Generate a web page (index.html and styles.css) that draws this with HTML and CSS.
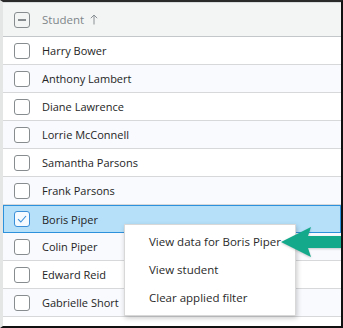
FILE: index.html
```html
<!DOCTYPE html>
<html>
<head>
<meta charset="utf-8">
<link rel="stylesheet" href="styles.css">
</head>
<body>
<div class="frame">
  <div class="grid">
    <div class="header">
      <span class="cb cb-mixed"><span class="dash"></span></span>
      <span class="hlabel">Student</span>
      <svg class="arrow-up" width="8" height="11" viewBox="0 0 8 11"><path d="M4 10.5 V1 M0.8 4.2 L4 1 L7.2 4.2" fill="none" stroke="#8a9094" stroke-width="1"/></svg>
    </div>
    <div class="row"><span class="cb"></span><span class="name">Harry Bower</span></div>
    <div class="row alt"><span class="cb"></span><span class="name">Anthony Lambert</span></div>
    <div class="row"><span class="cb"></span><span class="name">Diane Lawrence</span></div>
    <div class="row alt"><span class="cb"></span><span class="name">Lorrie McConnell</span></div>
    <div class="row"><span class="cb"></span><span class="name">Samantha Parsons</span></div>
    <div class="row alt"><span class="cb"></span><span class="name">Frank Parsons</span></div>
    <div class="row selected"><span class="cb cb-checked"><svg width="10" height="8" viewBox="0 0 10 8"><path d="M1 4.2 L3.8 7 L9 1" fill="none" stroke="#3b8fd9" stroke-width="1.1"/></svg></span><span class="name">Boris Piper</span></div>
    <div class="row alt"><span class="cb"></span><span class="name">Colin Piper</span></div>
    <div class="row"><span class="cb"></span><span class="name">Edward Reid</span></div>
    <div class="row alt"><span class="cb"></span><span class="name">Gabrielle Short</span></div>
  </div>
  <div class="menu">
    <div class="item">View data for Boris Piper</div>
    <div class="item">View student</div>
    <div class="item">Clear applied filter</div>
  </div>
  <svg class="pointer" width="61" height="32" viewBox="0 0 61 32">
    <polygon points="0,16 30,1 27,10 61,10 61,22 27,22 30,31" fill="#13a98a"/>
  </svg>
</div>
</body>
</html>
```
FILE: styles.css
```css
html, body {
  margin: 0;
  padding: 0;
  background: #ffffff;
}
.frame {
  position: relative;
  width: 343px;
  height: 328px;
  box-sizing: border-box;
  border-top: 2px solid #2a2a2a;
  border-right: 2px solid #111;
  border-bottom: 2px solid #111;
  border-left: 3px solid #e4e6e6;
  overflow: hidden;
  font-family: "Open Sans", "Noto Sans", sans-serif;
  font-size: 11px;
  color: #252525;
}
.grid {
  display: flex;
  flex-direction: column;
}
.header {
  height: 35px;
  box-sizing: border-box;
  background: #f3f5f4;
  border-top: 1px solid #d9dcdc;
  border-bottom: 1px solid #c4c7c9;
  display: flex;
  align-items: center;
  padding-left: 11px;
}
.hlabel {
  margin-left: 12px;
  color: #80868a;
  font-size: 11.5px;
}
.arrow-up {
  margin-left: 6px;
  flex: none;
}
.row {
  height: 28px;
  box-sizing: border-box;
  border-bottom: 1px solid #d6d8da;
  display: flex;
  align-items: center;
  padding-left: 11px;
  background: #ffffff;
}
.row.alt {
  background: #f8fafd;
}
.row.selected {
  background: #b6e0fa;
  border: 1px solid #2e91dc;
  padding-left: 10px;
}
.cb {
  width: 16px;
  height: 16px;
  box-sizing: border-box;
  border: 1px solid #878c8e;
  border-radius: 3px;
  background: #fff;
  display: flex;
  align-items: center;
  justify-content: center;
  flex: none;
}
.cb-mixed {
  background: transparent;
}
.dash {
  width: 8px;
  height: 2px;
  background: #878c8e;
}
.cb-checked {
  border-color: #3b8fd9;
  background: #f4faff;
}
.name {
  margin-left: 12px;
}
.menu {
  position: absolute;
  left: 121px;
  top: 222px;
  width: 170px;
  background: #fff;
  border: 1px solid #d8d8d8;
  box-shadow: 1px 2px 5px rgba(0,0,0,0.22);
  display: flex;
  flex-direction: column;
  font-size: 11.5px;
}
.item {
  height: 28px;
  line-height: 28px;
  padding-left: 24px;
  color: #2a2a2a;
}
.item:first-child {
  margin-top: 3px;
}
.item:last-child {
  margin-bottom: 3px;
}
.pointer {
  position: absolute;
  left: 278px;
  top: 224px;
  filter: drop-shadow(0 1px 1px rgba(0,0,0,0.2));
}
```
